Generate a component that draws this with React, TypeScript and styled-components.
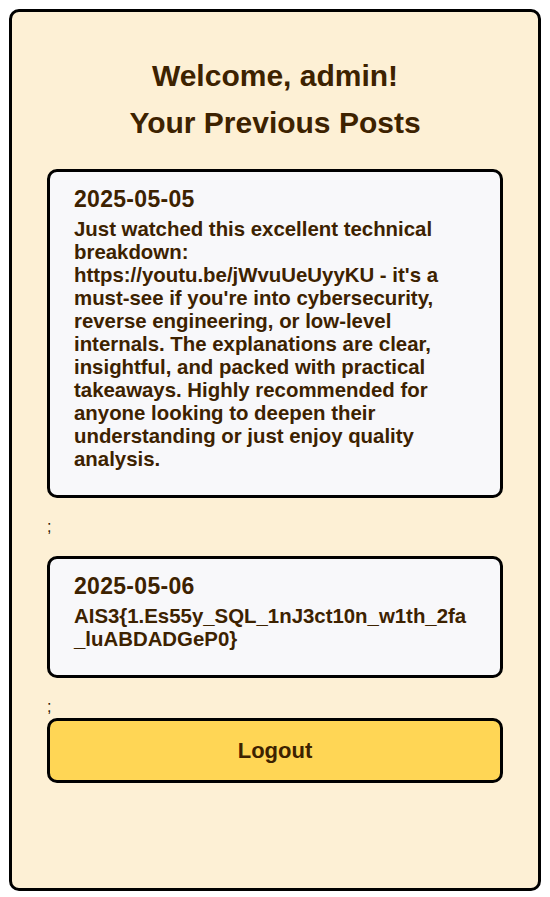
import React from "react";
import styled, { createGlobalStyle } from "styled-components";

const GlobalStyle = createGlobalStyle`
  html, body {
    margin: 0;
    padding: 0;
    background: #ffffff;
  }
  body {
    font-family: "Liberation Sans", Arial, sans-serif;
  }
  * {
    box-sizing: border-box;
  }
`;

const posts = [
  {
    id: 1,
    date: "2025-05-05",
    content:
      "Just watched this excellent technical breakdown: https://youtu.be/jWvuUeUyyKU - it's a must-see if you're into cybersecurity, reverse engineering, or low-level internals. The explanations are clear, insightful, and packed with practical takeaways. Highly recommended for anyone looking to deepen their understanding or just enjoy quality analysis.",
  },
  {
    id: 2,
    date: "2025-05-06",
    content: "AIS3{1.Es55y_SQL_1nJ3ct10n_w1th_2fa_luABDADGeP0}",
  },
];

const Page = styled.div`
  padding: 9px;
`;

const Panel = styled.div`
  height: 882px;
  padding: 47px 35px 0;
  background-color: #fdf0d5;
  border: 3px solid #000;
  border-radius: 10px;
  color: #2e1a00;
  font-size: 16px;
`;

const Title = styled.h2<{ $last?: boolean }>`
  margin: ${(p) => (p.$last ? "13px 0 29px" : "0")};
  font-size: 30px;
  line-height: 34px;
  font-weight: bold;
  text-align: center;
  color: #3d2200;
`;

const PostCard = styled.div`
  margin: 20px 0;
  padding: 15px 24px 24px;
  background-color: #f8f8fa;
  border: 3px solid #000;
  border-radius: 10px;
`;

const PostDate = styled.h3`
  margin: 0 0 6px;
  font-size: 23px;
  line-height: 25px;
  letter-spacing: 0.3px;
  font-weight: bold;
  color: #3d2200;
`;

const PostBody = styled.p`
  margin: 0;
  font-size: 20.4px;
  line-height: 23px;
  font-weight: bold;
  color: #3d2200;
  overflow-wrap: anywhere;
`;

const LogoutButton = styled.button`
  display: block;
  width: 100%;
  height: 65px;
  margin-top: 2px;
  background-color: #ffd655;
  border: 3px solid #000;
  border-radius: 10px;
  font-family: "Liberation Sans", Arial, sans-serif;
  font-size: 22px;
  font-weight: bold;
  color: #3d2200;
  cursor: pointer;
`;

export default function App() {
  return (
    <>
      <GlobalStyle />
      <Page>
        <Panel>
          <Title>Welcome, admin!</Title>
          <Title $last>Your Previous Posts</Title>
          {posts.map((post) => (
            <React.Fragment key={post.id}>
              <PostCard>
                <PostDate>{post.date}</PostDate>
                <PostBody>{post.content}</PostBody>
              </PostCard>
              ;
            </React.Fragment>
          ))}
          <LogoutButton>Logout</LogoutButton>
        </Panel>
      </Page>
    </>
  );
}
